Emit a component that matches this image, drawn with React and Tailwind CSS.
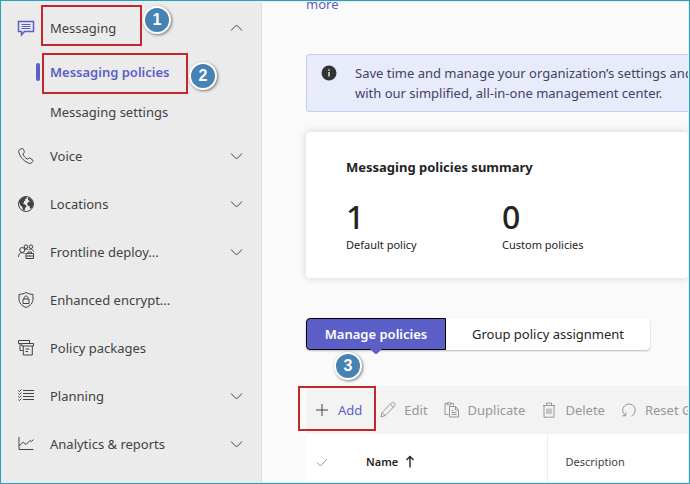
import React, { useState } from "react";
import clsx from "clsx";

const navItems = [
  { label: "Voice", icon: "voice", expandable: true },
  { label: "Locations", icon: "globe", expandable: true },
  { label: "Frontline deploy...", icon: "people", expandable: true },
  { label: "Enhanced encrypt...", icon: "shield" },
  { label: "Policy packages", icon: "packages" },
  { label: "Planning", icon: "planning", expandable: true },
  { label: "Analytics & reports", icon: "chart", expandable: true },
];

const toolbarItems = [
  { label: "Edit", icon: "edit" },
  { label: "Duplicate", icon: "duplicate" },
  { label: "Delete", icon: "trash" },
  { label: "Reset Global policy", icon: "reset" },
];

const iconShapes = {
  messaging: (
    <>
      <path d="M.5 1.500h15v10H6.500L3.500 15v-3.500H.5z" strokeWidth="1.500" />
      <path d="M3.500 4.500h9M3.500 6.500h9M3.500 8.500h9" />
    </>
  ),
  voice: (
    <path d="M2.2 1.2 4 .6c.6-.2 1 0 1.300.6l1 2.200c.2.6.1 1-.3 1.400L4.900 6c.6 1.900 2.300 4 4.400 5.100l1.500-.9c.5-.3.9-.2 1.400.1l2.300 1.500c.6.400.7.900.300 1.500l-1 1.300c-.6.7-1.400 1-2.400.7C6.500 14 2 9 .8 4.200.500 2.800 1 1.700 2.200 1.200z" />
  ),
  globe: (
    <>
      <circle cx="8" cy="8" r="7.500" />
      <path
        fill="currentColor"
        stroke="none"
        d="M1 6C2 3 4.500.8 8 .8l1 1.400-2 .9.3 1.300-1.600 1.100.4 1.300-1.400.6 2.300 1 1.600 1.700-1.400 2-.6 2.500-1.800-.8-.5-2.800-1.800-1.500zM10 1.500l3.200 1.500 1.900 3.500.1 2.500-1.500 3.200-1.700.3-.5-2.300-1.800-.8-.6-2 1.500-1.700 1.700-.2-1.500-1-.9-1z"
      />
    </>
  ),
  people: (
    <>
      <circle cx="4.200" cy="6" r="2.500" />
      <circle cx="8" cy="2.700" r="1.800" />
      <circle cx="13" cy="2.700" r="1.800" />
      <path d="M.5 13c0-2.700 1.300-4.300 3.700-4.300 1 0 1.800.3 2.400.8M7 6c.8-1.200 2.500-1.200 3.300 0M10.700 6c.9-1.500 3.900-1.500 4.800 1.500M8 9.500h7.500v5H8zM8 12h7.500M10 9.500V8h3.500v1.500M11.700 11.500v1" />
    </>
  ),
  shield: (
    <>
      <path d="M8 .5c2 1.200 4.200 1.700 7 1.900V7c0 4-2.600 6.600-7 8.500C3.600 13.600 1 11 1 7V2.400C3.800 2.200 6 1.700 8 .5z" />
      <path d="M5 7h6v4.500H5zM6.200 7V5.500C6.200 3.500 9.800 3.500 9.800 5.500V7" />
    </>
  ),
  packages: (
    <path d="M11.500 3.500v-3h-11v3h3M2 3.500v7h2.500M5 6h10.500V3.500H3.800V6h1.500v9h9V6M7.500 9h4M7.500 11.500h2.500" />
  ),
  planning: (
    <path d="M5 2.500h11M5 5.500h11M5 8.500h11M5 11.500h11M.3 2.500l1.200 1L3.500 1.500M.3 5.500l1.200 1L3.500 4.500M.3 8.500l1.200 1L3.500 7.500M.3 11.500l1.200 1L3.500 10.500" />
  ),
  chart: <path d="M1 1v12.500h14.500M1.200 10l4-4 2.800 2.500L12 4.500l1.500 1L15.500 3.500" />,
  info: (
    <>
      <circle cx="8" cy="8" r="7.500" fill="currentColor" stroke="none" />
      <path d="M8 7v4.500M8 4.300v1.400" stroke="#e8ebfa" strokeWidth="1.400" />
    </>
  ),
  plus: <path d="M8 2v12M2 8h12" />,
  edit: (
    <path d="M1 15l1-4.500L11.500 1c1-.9 2.200-.5 2.900.2.700.7 1 1.900.1 2.800L5.200 13.500zM2 10.500l3.200 3M10.300 2.200l3.200 3.100" />
  ),
  duplicate: (
    <path d="M4.500 12.500H1v-11h2M7 1.500h2.500v2M3 .8h4v2H3zM5.500 4.500h6L14.500 8v7h-9zM11.500 4.500V8h3M7.500 8.500h2M7.500 10.500h5M7.500 12.500h5" />
  ),
  trash: (
    <path d="M2 3.500h12M5.500 3.200V1h5v2.200M3 3.500v11.700h10V3.500M6 6.500v5.500M8 6.500v5.500M10 6.500v5.500" />
  ),
  reset: <path d="M4.500 13.500a6.300 6.300 0 1 1 6 .5M4.800 10.300v3.500H1.300" />,
  chevronDown: <path d="M2 5.500 7.500 11 13 5.500" />,
  chevronUp: <path d="M2 10.500 7.500 5 13 10.500" />,
  check: <path d="M3 8.500 6.500 12 13 5" />,
  arrowUp: <path d="M8 13.500V2.500M4.500 6 8 2.500 11.500 6" strokeWidth="1.400" />,
};

function Icon({ name, className }) {
  return (
    <svg
      viewBox="0 0 16 16"
      fill="none"
      stroke="currentColor"
      strokeWidth="1"
      aria-hidden="true"
      className={clsx("size-4 shrink-0 overflow-visible", className)}
    >
      {iconShapes[name]}
    </svg>
  );
}

// Numbered callout
function StepBadge({ number, className }) {
  return (
    <span
      className={clsx(
        "absolute flex size-7 items-center justify-center rounded-full border-2 border-white bg-[#4682b4] font-['Liberation_Sans'] text-base font-bold text-white shadow-[1px_1px_3px_#00000080]",
        className
      )}
    >
      {number}
    </span>
  );
}

// Red frame drawn around a highlighted control
function Highlight({ className }) {
  return (
    <span className={clsx("pointer-events-none absolute border-2 border-[#c1272d]", className)} />
  );
}

function Sidebar() {
  const [open, setOpen] = useState(true);

  return (
    <nav className="w-[260px] shrink-0 border-r border-[#e0e0e0] bg-[#ebebeb] pt-0.5 text-[#424242]">
      <div className="relative">
        <button
          type="button"
          aria-expanded={open}
          onClick={() => setOpen(!open)}
          className="flex h-12 w-full items-center gap-4 px-4 text-left"
        >
          <Icon name="messaging" className="text-[#5b5fc7]" />
          <span className="flex-1">Messaging</span>
          <Icon name={open ? "chevronUp" : "chevronDown"} />
        </button>
        <Highlight className="top-px left-[39px] h-[41px] w-[101px]" />
        <StepBadge number={1} className="top-0.5 left-[141px]" />
      </div>

      {open && (
        <ul>
          <li className="relative">
            <a href="#policies" className="flex h-10 items-center pl-[34px] font-semibold text-[#5b5fc7]">
              <span className="mr-2.5 h-[18px] w-1 rounded-full bg-[#5b5fc7]" />
              Messaging policies
            </a>
            <Highlight className="top-px left-10 h-[41px] w-[146px]" />
            <StepBadge number={2} className="top-2.5 left-[187px]" />
          </li>
          <li>
            <a href="#settings" className="flex h-10 items-center pl-12">
              Messaging settings
            </a>
          </li>
        </ul>
      )}

      {navItems.map((item) => (
        <button
          key={item.label}
          type="button"
          className="flex h-12 w-full items-center gap-4 px-4 text-left"
        >
          <Icon name={item.icon} />
          <span className="flex-1">{item.label}</span>
          {item.expandable && <Icon name="chevronDown" />}
        </button>
      ))}
    </nav>
  );
}

function Summary() {
  return (
    <section className="mt-5 rounded-sm bg-white px-10 py-[25px] text-[#242424] shadow-[0_0_8px_#00000029]">
      <h2 className="font-bold">Messaging policies summary</h2>
      <div className="mt-5 flex">
        <div className="w-39">
          <p className="text-[32px] leading-10 font-medium">1</p>
          <p className="text-[11px] leading-4">Default policy</p>
        </div>
        <div>
          <p className="text-[32px] leading-10 font-medium">0</p>
          <p className="text-[11px] leading-4">Custom policies</p>
        </div>
      </div>
    </section>
  );
}

function Tabs() {
  const [tab, setTab] = useState("manage");

  return (
    <div role="tablist" className="mt-10 flex w-[344px] rounded-sm bg-white shadow-[0_1px_2px_#00000040]">
      {[
        { id: "manage", label: "Manage policies", width: "w-[140px]" },
        { id: "group", label: "Group policy assignment", width: "flex-1" },
      ].map(({ id, label, width }) => (
        <button
          key={id}
          type="button"
          role="tab"
          aria-selected={tab === id}
          onClick={() => setTab(id)}
          className={clsx(
            "relative h-8 whitespace-nowrap",
            width,
            tab === id
              ? "rounded-l-sm border border-black bg-[#5b5fc7] font-semibold text-white"
              : "text-[#242424]"
          )}
        >
          {label}
          {tab === id && (
            <svg
              viewBox="0 0 12 5"
              aria-hidden="true"
              className="absolute top-full left-1/2 h-[5px] w-3 -translate-x-1/2 fill-[#5b5fc7]"
            >
              <path d="M0 0h12L7.500 4.300q-1.500 1.200-3 0z" />
            </svg>
          )}
        </button>
      ))}
    </div>
  );
}

function Toolbar() {
  return (
    <div className="relative mt-9 flex h-12 items-center bg-[#f3f3f3] pl-2 whitespace-nowrap">
      <button type="button" className="flex items-center gap-2 text-[#5b5fc7]">
        <Icon name="plus" className="text-[#424242]" />
        Add
      </button>
      <div className="ml-[18px] flex gap-4 text-[#979797]">
        {toolbarItems.map((item) => (
          <button key={item.label} type="button" className="flex items-center gap-2">
            <Icon name={item.icon} />
            {item.label}
          </button>
        ))}
      </div>
      <Highlight className="top-0 -left-2 h-[45px] w-[78px]" />
      <StepBadge number={3} className="-top-[34px] left-7" />
    </div>
  );
}

function PolicyTable() {
  return (
    <table className="w-full table-fixed bg-white text-left text-[11px] text-[#424242]">
      <thead>
        <tr className="h-14">
          <th className="w-15 pl-2 font-normal">
            <Icon name="check" className="text-[#979797]" />
          </th>
          <th className="w-[181px] border-r border-[#ededed] font-semibold text-[#242424]">
            <span className="flex items-center gap-1">
              Name
              <Icon name="arrowUp" />
            </span>
          </th>
          <th className="pl-[18px] font-normal">Description</th>
        </tr>
      </thead>
    </table>
  );
}

export default function App() {
  return (
    <div className="h-screen border border-[#3a9bb0] bg-[#d3f5fa] p-px font-['Noto_Sans',sans-serif] text-[13px] leading-5">
      <div className="flex h-full overflow-hidden bg-[#fafafa]">
        <Sidebar />
        <main className="min-w-0 flex-1 overflow-hidden pl-11">
          <a href="#more" className="-mt-2 block text-[#5b5fc7]">
            more
          </a>
          <div className="mt-10 flex gap-[18px] rounded-l-sm border border-r-0 border-[#c5cbee] bg-[#e8ebfa] py-2 pl-3.5 text-[#424266]">
            <Icon name="info" className="mt-0.5 text-[#333333]" />
            <p className="whitespace-nowrap">
              Save time and manage your organization’s settings and
              <br />
              with our simplified, all-in-one management center.
            </p>
          </div>
          <Summary />
          <Tabs />
          <Toolbar />
          <PolicyTable />
        </main>
      </div>
    </div>
  );
}
